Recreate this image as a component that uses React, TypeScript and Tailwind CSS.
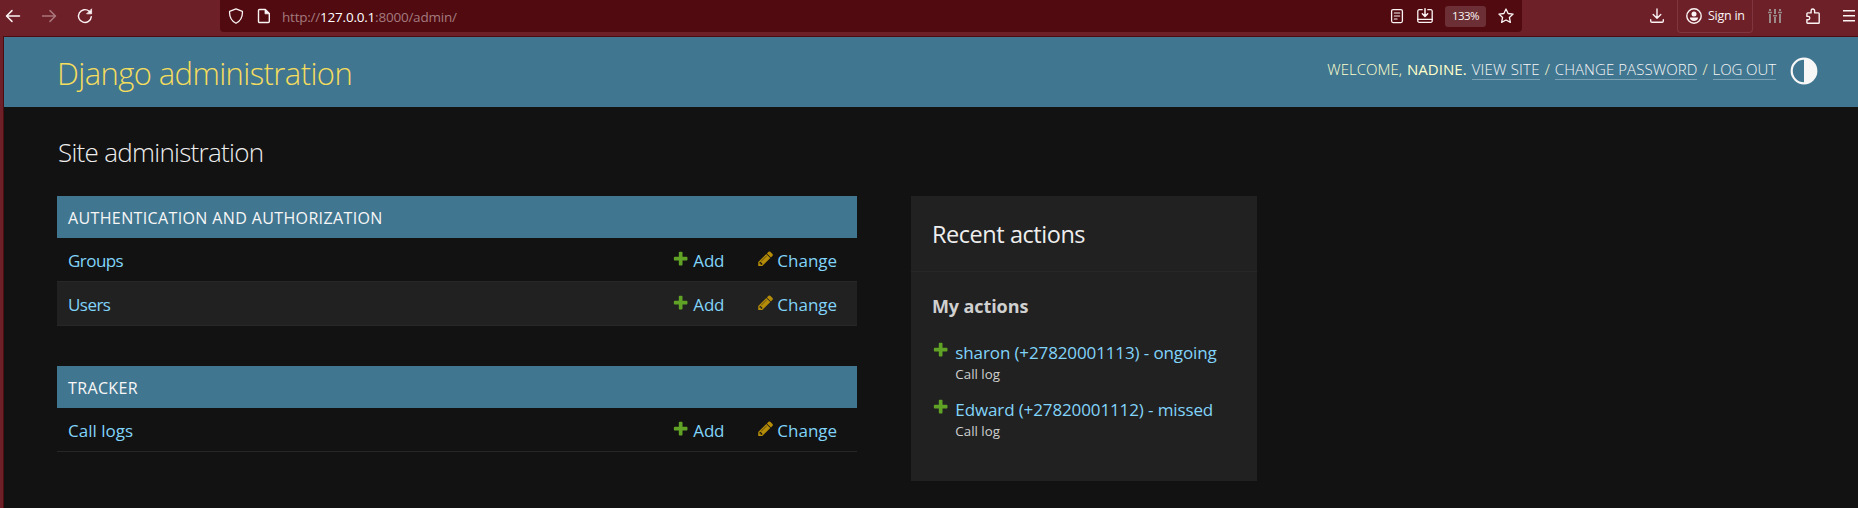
import React from "react";

type IconProps = { className?: string };

function BackIcon({ className = "" }: IconProps) {
  return (
    <svg viewBox="0 0 16 16" className={className} fill="none" stroke="currentColor" strokeWidth="1.5" strokeLinecap="round" strokeLinejoin="round">
      <path d="M14.5 8H1.6M7 2.6 1.5 8 7 13.4" />
    </svg>
  );
}

function ReloadIcon({ className = "" }: IconProps) {
  return (
    <svg viewBox="0 0 16 16" className={className} fill="none" stroke="currentColor" strokeWidth="1.4" strokeLinecap="round" strokeLinejoin="round">
      <path d="M14.3 8.6A6.4 6.4 0 1 1 12.2 3.3l1 1" />
      <path d="M14.6 1.2v4.6H10z" fill="currentColor" strokeWidth="0.8" />
    </svg>
  );
}

function ShieldIcon({ className = "" }: IconProps) {
  return (
    <svg viewBox="0 0 16 16" className={className} fill="none" stroke="currentColor" strokeWidth="1.3" strokeLinejoin="round">
      <path d="M8 .9 14.4 3.3c.3 4.8-1.2 9.2-6.4 12C2.8 12.5 1.3 8.1 1.6 3.3z" />
    </svg>
  );
}

function PageIcon({ className = "" }: IconProps) {
  return (
    <svg viewBox="0 0 16 16" className={className} fill="none" stroke="currentColor" strokeWidth="1.4" strokeLinejoin="round">
      <path d="M3.5 1.5h5.8l4 4v8a1 1 0 0 1-1 1H3.5a1 1 0 0 1-1-1v-11a1 1 0 0 1 1-1z" />
      <path d="M9 1.5v4.3h4.3z" fill="currentColor" strokeWidth="0.8" />
    </svg>
  );
}

function ReaderIcon({ className = "" }: IconProps) {
  return (
    <svg viewBox="0 0 16 16" className={className} fill="none" stroke="currentColor" strokeWidth="1.3" strokeLinecap="round">
      <rect x="2.6" y="1.6" width="10.8" height="13" rx="1.5" />
      <path d="M5.3 5h5.4M5.3 8h5.4M5.3 11h2.8" strokeWidth="1.1" />
    </svg>
  );
}

function SaveTrayIcon({ className = "" }: IconProps) {
  return (
    <svg viewBox="0 0 16 16" className={className} fill="none" stroke="currentColor" strokeWidth="1.3" strokeLinecap="round" strokeLinejoin="round">
      <path d="M5.2 1.7h-3A1.4 1.4 0 0 0 .8 3.1v9.8a1.4 1.4 0 0 0 1.4 1.4h11.6a1.4 1.4 0 0 0 1.4-1.4V3.1a1.4 1.4 0 0 0-1.4-1.4h-3" />
      <path d="M.8 11.4h14.4" />
      <path d="M8 .8v7.4M5.3 5.7 8 8.4l2.7-2.7" strokeWidth="1.5" />
    </svg>
  );
}

function StarIcon({ className = "" }: IconProps) {
  return (
    <svg viewBox="0 0 16 16" className={className} fill="none" stroke="currentColor" strokeWidth="1.3" strokeLinejoin="round">
      <path d="m8 1 2.1 4.5 5 .6-3.7 3.4 1 4.9L8 12l-4.4 2.4 1-4.9L.9 6.1l5-.6z" />
    </svg>
  );
}

function DownloadIcon({ className = "" }: IconProps) {
  return (
    <svg viewBox="0 0 16 16" className={className} fill="none" stroke="currentColor" strokeWidth="1.4" strokeLinecap="round" strokeLinejoin="round">
      <path d="M8 1v9M4.2 6.6 8 10.3l3.8-3.7M1.7 11.8V13c0 .8.6 1.3 1.3 1.3h10c.7 0 1.3-.5 1.3-1.3v-1.2" />
    </svg>
  );
}

function AccountIcon({ className = "" }: IconProps) {
  return (
    <svg viewBox="0 0 16 16" className={className} fill="none" stroke="currentColor" strokeWidth="1.4">
      <circle cx="8" cy="8" r="7.2" />
      <circle cx="8" cy="6" r="2.5" fill="currentColor" stroke="none" />
      <path d="M3.9 9.4h8.2c0 2-1.8 3.5-4.1 3.5s-4.1-1.5-4.1-3.5z" fill="currentColor" stroke="none" />
    </svg>
  );
}

function SlidersIcon({ className = "" }: IconProps) {
  return (
    <svg viewBox="0 0 16 16" className={className} fill="currentColor">
      <path d="M2 1h2v2H2zM2 6h2v9H2zM1 3.8h4v1.4H1zM7 1h2v5H7zM7 9h2v6H7zM6 7h4v1.4H6zM12 1h2v2h-2zM12 6h2v9h-2zM11 3.8h4v1.4h-4z" />
    </svg>
  );
}

function PuzzleIcon({ className = "" }: IconProps) {
  return (
    <svg viewBox="0 0 16 16" className={className} fill="none" stroke="currentColor" strokeWidth="1.4" strokeLinejoin="round">
      <path d="M2.6 15.2a.7.7 0 0 1-.7-.7v-2.7h1.2a1.7 1.7 0 0 0 0-3.4H1.9V5.7c0-.5.4-.8.8-.8h3.4V2.7a1.75 1.75 0 0 1 3.5 0v2.2h3.8c.5 0 .8.4.8.8v8.7c0 .5-.4.8-.8.8z" />
    </svg>
  );
}

function MenuIcon({ className = "" }: IconProps) {
  return (
    <svg viewBox="0 0 16 16" className={className} fill="currentColor">
      <path d="M2 2h12v1.400H2zM2 7h12v1.400H2zM2 12h12v1.400H2z" />
    </svg>
  );
}

function AddIcon({ className = "" }: IconProps) {
  return (
    <svg viewBox="0 0 1792 1792" className={className} fill="#5fa225">
      <path d="M1600 796v192q0 40-28 68t-68 28h-416v416q0 40-28 68t-68 28H800q-40 0-68-28t-28-68v-416H288q-40 0-68-28t-28-68V796q0-40 28-68t68-28h416V284q0-40 28-68t68-28h192q40 0 68 28t28 68v416h416q40 0 68 28t28 68z" />
    </svg>
  );
}

function PencilIcon({ className = "" }: IconProps) {
  return (
    <svg viewBox="0 0 1792 1792" className={className} fill="#b48c08">
      <path d="M491 1536l91-91-235-235-91 91v107h128v128h107zm523-928q0-22-22-22-10 0-17 7l-542 542q-7 7-7 17 0 22 22 22 10 0 17-7l542-542q7-7 7-17zm-54-192l416 416-832 832H128v-416zm683 96q0 53-37 90l-166 166-416-416 166-165q36-38 90-38 53 0 91 38l235 234q37 39 37 91z" />
    </svg>
  );
}

function ThemeIcon({ className = "" }: IconProps) {
  return (
    <svg viewBox="0 0 28 28" className={className}>
      <circle cx="14" cy="14" r="12.3" fill="none" stroke="#f7f7f7" strokeWidth="2.2" />
      <path d="M14 1.5a12.5 12.5 0 0 1 0 25z" fill="#f7f7f7" />
    </svg>
  );
}

function Toolbar() {
  return (
    <div className="flex h-9 items-start bg-[#6d2028] text-[#fbf3f4]">
      <div className="flex h-8 w-[220px] shrink-0 items-center pl-[5px]">
        <BackIcon className="size-4" />
        <BackIcon className="ml-5 size-4 rotate-180 text-[#a9767b]" />
        <ReloadIcon className="ml-5 size-4" />
      </div>
      <div className="flex h-8 w-[1302px] shrink-0 items-center rounded-b-[4px] bg-[#500a10] pl-2">
        <ShieldIcon className="size-4" />
        <PageIcon className="ml-3 size-4" />
        <div className="ml-2.5 flex-1 pt-px text-[13.5px] leading-5 tracking-[-0.22px] whitespace-nowrap text-[#a47a7e]">
          http://<span className="text-white">127.0.0.1</span>:8000/admin/
        </div>
        <ReaderIcon className="mr-3 size-4" />
        <SaveTrayIcon className="mr-3 size-4" />
        <div className="mr-3 flex h-[21px] w-[41px] items-center justify-center rounded-[3px] bg-[#6c2f35] text-[11.5px] tracking-[-0.5px]">133%</div>
        <StarIcon className="mr-2 size-4" />
      </div>
      <div className="flex h-8 flex-1 items-center pl-[127px]">
        <DownloadIcon className="size-4 shrink-0" />
        <div className="ml-3 flex h-[33px] w-[76px] shrink-0 items-center rounded-b-[4px] border border-t-0 border-[#80363e] pl-2">
          <AccountIcon className="size-4 shrink-0" />
          <span className="ml-1.5 pt-0.5 text-[12.5px] tracking-[-0.25px] whitespace-nowrap">Sign in</span>
        </div>
        <SlidersIcon className="ml-3.5 size-4 shrink-0 text-[#9a8a8a]" />
        <PuzzleIcon className="ml-[22px] size-4 shrink-0" />
        <MenuIcon className="ml-5 size-4 shrink-0" />
      </div>
    </div>
  );
}

function Header() {
  return (
    <header className="flex h-[70px] items-center justify-between bg-[#417690] pr-10 pl-[53px]">
      <div className="pt-0.5 text-[31px] leading-10 font-light tracking-[-0.6px] text-[#f5dd5d]">Django administration</div>
      <div className="flex items-center">
        <div className="mb-1 flex text-[15px] leading-[19px] font-light whitespace-nowrap text-[#ffffcc]">
          <span>WELCOME,</span>
          <strong className="ml-[5px] font-medium tracking-[0.05px]">NADINE.</strong>
          <a className="ml-[5px] border-b border-[#7ba1b4] tracking-[0.2px] text-[#f7f7f7]">VIEW SITE</a>
          <span className="ml-[5px]">/</span>
          <a className="ml-[5px] border-b border-[#7ba1b4] tracking-[0.08px] text-[#f7f7f7]">CHANGE PASSWORD</a>
          <span className="ml-[5px]">/</span>
          <a className="ml-[5px] border-b border-[#7ba1b4] tracking-[-0.08px] text-[#f7f7f7]">LOG OUT</a>
        </div>
        <ThemeIcon className="mb-0.5 ml-3.5 size-7" />
      </div>
    </header>
  );
}

function AppModule({ title, models }: { title: string; models: string[] }) {
  return (
    <section>
      <h2 className="h-[42px] bg-[#417690] pt-px pl-[11px] text-[16px] leading-[42px] tracking-[0.37px] text-[#f7f7f7]">{title}</h2>
      {models.map((name) => (
        <div key={name} className="flex h-11 items-center border-b border-[#272727] pt-0.5 pl-[11px] text-[17px] text-[#81d4fa] odd:bg-[#212121] even:bg-[#121212]">
          <a className={name.includes(" ") ? "flex-1" : "flex-1 tracking-[-0.55px]"}>{name}</a>
          <a className="flex w-[85px] items-center tracking-[-0.2px]">
            <AddIcon className="mr-1 mb-1 size-[17.33px]" />
            Add
          </a>
          <a className="flex w-[100px] items-center">
            <PencilIcon className="mr-[3px] mb-1 size-[17.33px]" />
            Change
          </a>
        </div>
      ))}
    </section>
  );
}

const recent = [
  { label: "sharon (+27820001113) - ongoing", kind: "Call log" },
  { label: "Edward (+27820001112) - missed", kind: "Call log" },
];

function RecentActions() {
  return (
    <aside className="h-[285px] w-[346px] bg-[#212121]">
      <h2 className="h-[76px] border-b border-[#272727] pl-[21px] text-[23.5px] leading-[77px] tracking-[-0.45px] text-[#eeeeee]">Recent actions</h2>
      <h3 className="mt-[22px] pl-[21px] text-[18px] leading-6 font-bold tracking-[-0.1px] text-[#d0d0d0]">My actions</h3>
      <ul className="mt-[23px] flex flex-col gap-[15px] pl-[21px]">
        {recent.map((item) => (
          <li key={item.label} className="flex">
            <AddIcon className="size-[17.33px]" />
            <div className="ml-[6px]">
              <a className="block text-[17px] leading-6 tracking-[-0.12px] whitespace-nowrap text-[#81d4fa]">{item.label}</a>
              <span className="block text-[13.33px] leading-[18px] text-[#d0d0d0]">{item.kind}</span>
            </div>
          </li>
        ))}
      </ul>
    </aside>
  );
}

export default function App() {
  return (
    <div className="h-[508px] w-[1858px] overflow-hidden bg-[#6d2028] font-['Open_Sans','Noto_Sans',sans-serif]">
      <Toolbar />
      <div className="ml-[3px] h-[472px] border-t border-l border-[#4d0c12] bg-[#121212]">
        <Header />
        <main className="pt-[29px] pl-[53px]">
          <h1 className="mb-7 pl-px text-[26px] leading-8 font-light tracking-[-0.72px] text-[#eeeeee]">Site administration</h1>
          <div className="flex gap-[54px]">
            <div className="flex w-[800px] flex-col gap-10">
              <AppModule title="AUTHENTICATION AND AUTHORIZATION" models={["Groups", "Users"]} />
              <AppModule title="TRACKER" models={["Call logs"]} />
            </div>
            <RecentActions />
          </div>
        </main>
      </div>
    </div>
  );
}
